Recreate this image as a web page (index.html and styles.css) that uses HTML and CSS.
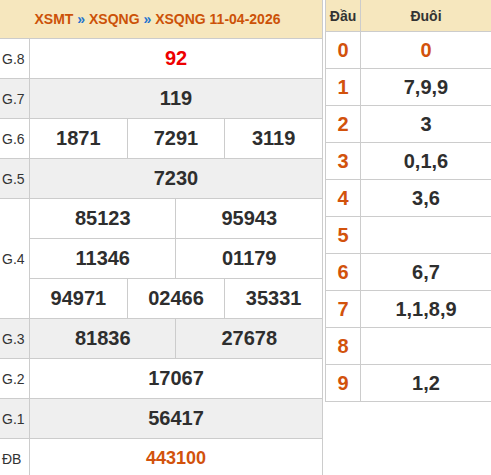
FILE: index.html
```html
<!DOCTYPE html>
<html lang="vi">
<head>
<meta charset="utf-8">
<title>XSQNG 11-04-2026</title>
<link rel="stylesheet" href="styles.css">
</head>
<body>
<div class="wrap">
  <table class="kq">
    <colgroup>
      <col class="c-label"><col><col><col><col><col><col>
    </colgroup>
    <thead>
      <tr class="head">
        <th colspan="7"><span class="crumb">XSMT <b>»</b> XSQNG <b>»</b> XSQNG 11-04-2026</span></th>
      </tr>
    </thead>
    <tbody>
      <tr><td class="lb">G.8</td><td colspan="6" class="num red">92</td></tr>
      <tr class="alt"><td class="lb">G.7</td><td colspan="6" class="num">119</td></tr>
      <tr><td class="lb">G.6</td><td colspan="2" class="num">1871</td><td colspan="2" class="num">7291</td><td colspan="2" class="num">3119</td></tr>
      <tr class="alt"><td class="lb">G.5</td><td colspan="6" class="num">7230</td></tr>
      <tr><td class="lb" rowspan="3">G.4</td><td colspan="3" class="num">85123</td><td colspan="3" class="num">95943</td></tr>
      <tr><td colspan="3" class="num">11346</td><td colspan="3" class="num">01179</td></tr>
      <tr><td colspan="2" class="num">94971</td><td colspan="2" class="num">02466</td><td colspan="2" class="num">35331</td></tr>
      <tr class="alt"><td class="lb">G.3</td><td colspan="3" class="num">81836</td><td colspan="3" class="num">27678</td></tr>
      <tr><td class="lb">G.2</td><td colspan="6" class="num">17067</td></tr>
      <tr class="alt"><td class="lb">G.1</td><td colspan="6" class="num">56417</td></tr>
      <tr><td class="lb">ĐB</td><td colspan="6" class="num db">443100</td></tr>
    </tbody>
  </table>

  <table class="loto">
    <colgroup><col class="c-dau"><col></colgroup>
    <thead>
      <tr class="head"><th>Đầu</th><th>Đuôi</th></tr>
    </thead>
    <tbody>
      <tr><td class="dau">0</td><td class="duoi orange">0</td></tr>
      <tr><td class="dau">1</td><td class="duoi">7,9,9</td></tr>
      <tr><td class="dau">2</td><td class="duoi">3</td></tr>
      <tr><td class="dau">3</td><td class="duoi">0,1,6</td></tr>
      <tr><td class="dau">4</td><td class="duoi">3,6</td></tr>
      <tr><td class="dau">5</td><td class="duoi"></td></tr>
      <tr><td class="dau">6</td><td class="duoi">6,7</td></tr>
      <tr><td class="dau">7</td><td class="duoi">1,1,8,9</td></tr>
      <tr><td class="dau">8</td><td class="duoi"></td></tr>
      <tr><td class="dau">9</td><td class="duoi">1,2</td></tr>
    </tbody>
  </table>
</div>
</body>
</html>
```

FILE: styles.css
```css
html, body {
  margin: 0;
  padding: 0;
  background: #fff;
  overflow: hidden;
}
body {
  font-family: "Liberation Sans", Arial, sans-serif;
  color: #333;
}
.wrap {
  display: flex;
  align-items: flex-start;
  gap: 2px;
  margin: -1px 0 0 -1px;
}
table {
  border-collapse: collapse;
  table-layout: fixed;
}
td, th {
  border: 1px solid #ccc;
  padding: 0;
  text-align: center;
  vertical-align: middle;
}
.kq {
  width: 324px;
  flex: none;
}
.c-label { width: 30px; }
.kq .head th {
  height: 38px;
  background: #f6e7be;
  font-size: 14px;
  font-weight: bold;
  color: #cc5208;
  padding-right: 7px;
}
.crumb b { color: #1f74cf; font-weight: bold; }
.kq td { height: 39px; }
.kq .lb {
  text-align: left;
  padding-left: 2px;
  font-size: 14px;
  color: #333;
}
.kq .alt td { background: #efefef; }
.num {
  font-size: 20px;
  font-weight: bold;
  color: #2e2e2e;
}
.num.red { color: #ee0000; }
.num.db { color: #d2520c; font-size: 18px; }

.loto {
  width: 167px;
  flex: none;
}
.c-dau { width: 35px; }
.loto .head th {
  height: 31px;
  background: #f6e7be;
  font-size: 14px;
  font-weight: bold;
  color: #333;
}
.loto td { height: 36px; font-size: 20px; font-weight: bold; }
.dau { color: #d2520c; }
.duoi { color: #2e2e2e; }
.duoi.orange { color: #d2520c; }
```
